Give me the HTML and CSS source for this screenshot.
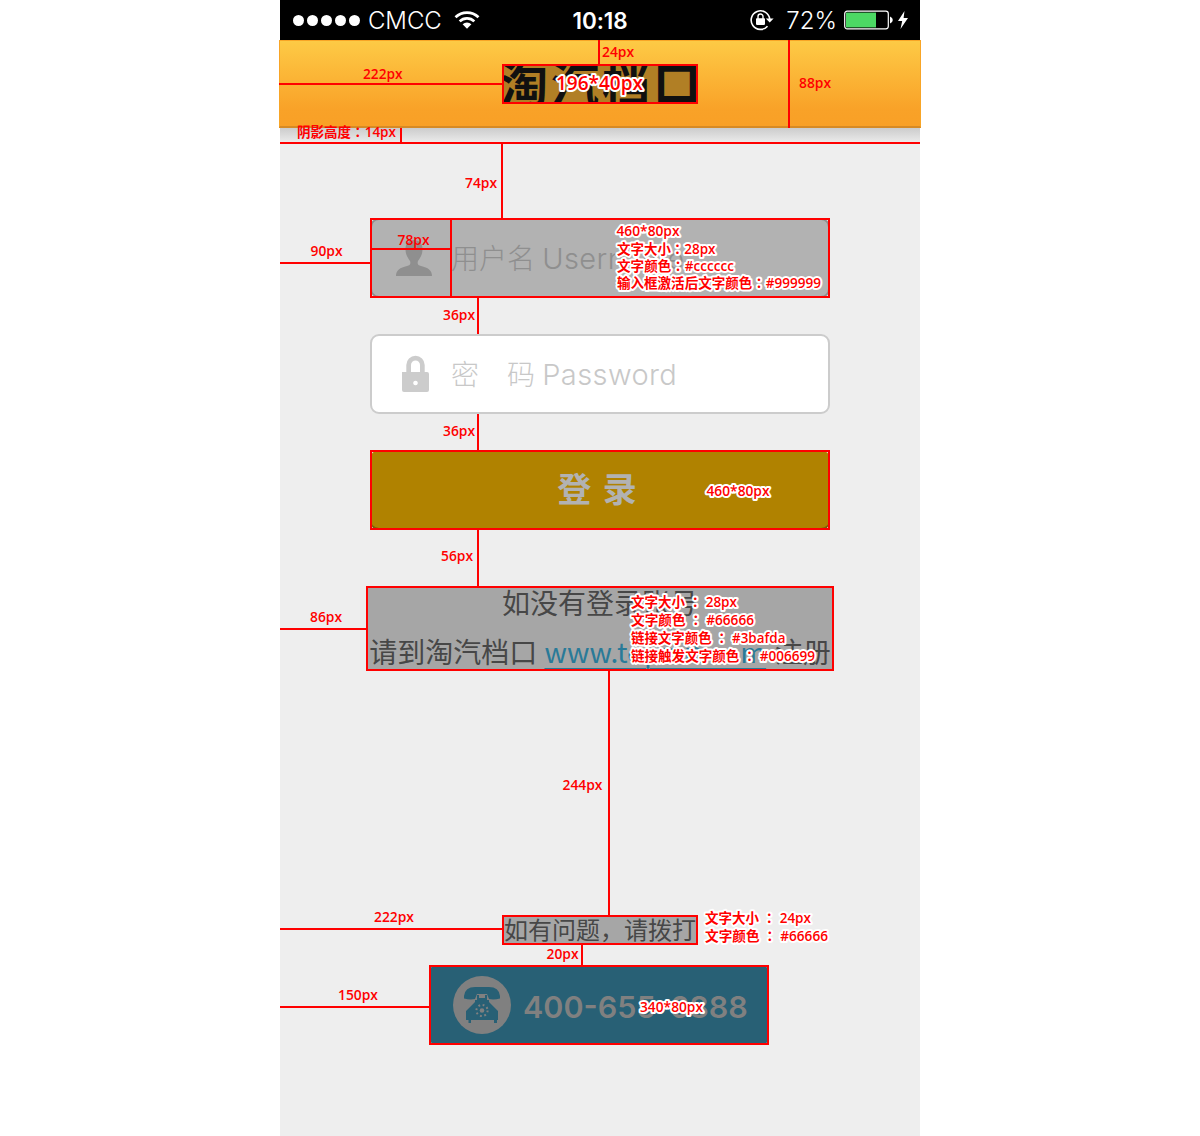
FILE: index.html
```html
<!DOCTYPE html>
<html lang="zh-CN">
<head>
<meta charset="utf-8">
<title>淘汽档口 登录</title>
<link rel="stylesheet" href="styles.css">
</head>
<body>
<div class="phone">
  <div class="status">
    <div class="status-left">
      <span class="signal"><i></i><i></i><i></i><i></i><i></i></span>
      <span class="carrier">CMCC</span>
      <svg class="wifi" width="26" height="20" viewBox="0 0 26 20"><g fill="none" stroke="#fff" stroke-width="2.7"><path d="M1.5 7.2a16.5 16.5 0 0 1 23 0"/><path d="M5.7 11.4a10.4 10.4 0 0 1 14.6 0"/></g><path d="M8.6 14.3a6.3 6.3 0 0 1 8.8 0L13 18.8z" fill="#fff"/></svg>
    </div>
    <span class="time">10:18</span>
    <div class="status-right">
      <svg class="rotate" width="24" height="22" viewBox="0 0 24 22"><path d="M17.500 17.200A9.300 9.300 0 1 1 19.700 10" fill="none" stroke="#fff" stroke-width="1.6"/><path d="M15.800 9.600h7.800l-3.900 4z" fill="#fff"/><rect x="6" y="9.300" width="9" height="6.600" rx=".8" fill="#fff"/><path d="M8 10V7.500a2.500 2.500 0 0 1 5 0V10" fill="none" stroke="#fff" stroke-width="1.4"/></svg>
      <span class="percent">72%</span>
      <svg class="battery" width="49" height="20" viewBox="0 0 49 20"><rect x=".7" y="1.200" width="43.600" height="17.600" rx="2.5" fill="none" stroke="#fff" stroke-width="1.2"/><rect x="2" y="2.600" width="30" height="14.800" fill="#4cd964"/><path d="M46 6.500q2.800 1 2.800 3.500t-2.800 3.500z" fill="#fff"/></svg>
      <svg class="bolt" width="12" height="20" viewBox="0 0 12 20"><path d="M7.500 1 1 11h4.200L3.500 19 11 8H6.600z" fill="#fff"/></svg>
    </div>
  </div>
  <header class="header"><h1 class="logo">淘汽档口</h1></header>
  <main class="main">
    <div class="field shaded">
      <svg class="field-icon" width="78" height="76" viewBox="0 0 78 76"><path d="M42 20c5.400 0 8.500 3.500 8.500 9 0 6-2.500 9-4.500 12-1 3 0 4.300 3 5 7 1.500 11 4.500 11 10H24c0-5.500 4-8.500 11-10 3-.7 4-2 3-5-2-3-4.500-6-4.500-12 0-5.500 3.100-9 8.500-9z"/></svg>
      <span class="placeholder">用户名 <b>Username</b></span>
    </div>
    <div class="field">
      <svg class="field-icon" width="78" height="76" viewBox="0 0 78 76"><path fill-rule="evenodd" d="M30 36h1.500h2.800V29a9.200 9.200 0 0 1 18.400 0v7h2.300a2 2 0 0 1 2 2v16a2 2 0 0 1-2 2H32a2 2 0 0 1-2-2zM39 36h9v-7a4.500 4.500 0 0 0-9 0zM43.500 44.700a2.300 2.300 0 1 0 .01 0z"/></svg>
      <span class="placeholder">密　码 <b>Password</b></span>
    </div>
    <button class="login" type="button">登 录</button>
    <p class="register"><span>如没有登录账号</span><span class="second">请到淘汽档口 <a class="link" href="#">www.topwit.com</a> 注册</span></p>
    <p class="question">如有问题，请拨打</p>
    <div class="call">
      <svg class="phone-icon" width="58" height="58" viewBox="0 0 58 58"><circle class="disc" cx="29" cy="29" r="29"/><path class="handset" d="M11 20q1-9 11-9h14q10 0 11 9v2.500q-6 1.500-11 .5l-2-5H24l-2 5q-5 1-11-.5z"/><path class="handset" d="M22 24h2v-5h2v3h6v-3h2v5h2v2l9 9v9h-1v3H41v-3H18v3h-2.500v-3H13v-9l9-9z"/><circle class="disc" cx="29" cy="34.500" r="2.300"/><circle class="dial" cx="29" cy="34.500" r="5.600"/></svg>
      <span class="number">400-655-6888</span>
    </div>
  </main>

  <svg class="notes" width="1200" height="1136" viewBox="0 0 1200 1136">
    <g class="lines">
      <path d="M599 40V64M279 84H502M789 40V128M280 143H920M401 128V142M502 144V218M280 263H370M372 249H451M451 218V298M478 298V334M478 414V450M478 530V586M280 629H366M609 671V915M280 929H502M582 945V965M280 1007H429"/>
      <rect x="503" y="65" width="194" height="38"/>
      <rect x="371" y="219" width="458" height="78"/>
      <rect x="371" y="451" width="458" height="78"/>
      <rect x="367" y="587" width="466" height="83"/>
      <rect x="503" y="916" width="194" height="28"/>
      <rect x="430" y="966" width="338" height="78"/>
    </g>
    <g class="labels">
      <text x="363" y="79" textLength="39.500" lengthAdjust="spacingAndGlyphs">222px</text>
      <text x="602" y="57" textLength="32" lengthAdjust="spacingAndGlyphs">24px</text>
      <text x="799" y="88" textLength="32" lengthAdjust="spacingAndGlyphs">88px</text>
      <text x="297" y="137" textLength="99" lengthAdjust="spacingAndGlyphs">阴影高度<tspan class="colon" lang="zh-TW">：</tspan>14px</text>
      <text x="465" y="188" textLength="32" lengthAdjust="spacingAndGlyphs">74px</text>
      <text x="310.500" y="256" textLength="32" lengthAdjust="spacingAndGlyphs">90px</text>
      <text x="397.500" y="245" textLength="32" lengthAdjust="spacingAndGlyphs">78px</text>
      <text x="443" y="320" textLength="32" lengthAdjust="spacingAndGlyphs">36px</text>
      <text x="443" y="436" textLength="32" lengthAdjust="spacingAndGlyphs">36px</text>
      <text x="441" y="561" textLength="32" lengthAdjust="spacingAndGlyphs">56px</text>
      <text x="310" y="622" textLength="32" lengthAdjust="spacingAndGlyphs">86px</text>
      <text x="562.500" y="790" textLength="40" lengthAdjust="spacingAndGlyphs">244px</text>
      <text x="374" y="922" textLength="40" lengthAdjust="spacingAndGlyphs">222px</text>
      <text x="546.500" y="959" textLength="32" lengthAdjust="spacingAndGlyphs">20px</text>
      <text x="338" y="1000" textLength="40" lengthAdjust="spacingAndGlyphs">150px</text>
    </g>
    <g class="labels outlined">
      <text class="large" x="556" y="90" textLength="87" lengthAdjust="spacingAndGlyphs">196*40px</text>
      <text x="616.500" y="236" textLength="63" lengthAdjust="spacingAndGlyphs">460*80px</text>
      <text x="617" y="254" textLength="98.500" lengthAdjust="spacingAndGlyphs">文字大小<tspan class="colon" lang="zh-TW">：</tspan>28px</text>
      <text x="617" y="271" textLength="117" lengthAdjust="spacingAndGlyphs">文字颜色<tspan class="colon" lang="zh-TW">：</tspan>#cccccc</text>
      <text x="617" y="288" textLength="204" lengthAdjust="spacingAndGlyphs">输入框激活后文字颜色<tspan class="colon" lang="zh-TW">：</tspan>#999999</text>
      <text x="706.500" y="496" textLength="63" lengthAdjust="spacingAndGlyphs">460*80px</text>
      <text x="631" y="607" textLength="106" lengthAdjust="spacingAndGlyphs">文字大小 <tspan class="colon" lang="zh-TW">：</tspan> 28px</text>
      <text x="631" y="625" textLength="123" lengthAdjust="spacingAndGlyphs">文字颜色 <tspan class="colon" lang="zh-TW">：</tspan> #66666</text>
      <text x="631" y="643" textLength="154.500" lengthAdjust="spacingAndGlyphs">链接文字颜色 <tspan class="colon" lang="zh-TW">：</tspan> #3bafda</text>
      <text x="631" y="661" textLength="184" lengthAdjust="spacingAndGlyphs">链接触发文字颜色 <tspan class="colon" lang="zh-TW">：</tspan> #006699</text>
      <text x="705" y="923" textLength="106" lengthAdjust="spacingAndGlyphs">文字大小 <tspan class="colon" lang="zh-TW">：</tspan> 24px</text>
      <text x="705" y="941" textLength="123" lengthAdjust="spacingAndGlyphs">文字颜色 <tspan class="colon" lang="zh-TW">：</tspan> #66666</text>
      <text x="640" y="1012" textLength="63" lengthAdjust="spacingAndGlyphs">340*80px</text>
    </g>
  </svg>
</div>
</body>
</html>
```
FILE: styles.css
```css
* { box-sizing: border-box; }
body { margin: 0; background: #fff; font-family: "Noto Sans CJK SC", sans-serif; }
.phone { width: 640px; height: 1136px; margin: 0 auto; background: #eee; position: relative; }
.status { height: 40px; background: #000; color: #fff; display: grid; grid-template-columns: 1fr auto 1fr; align-items: center; padding: 0 11px 0 13px; font-family: Inter, sans-serif; font-size: 24px; line-height: 38px; }
.status-left, .status-right { display: flex; align-items: center; }
.status-right { justify-content: flex-end; }
.signal { display: flex; gap: 3px; }
.signal i { width: 11px; height: 11px; border-radius: 50%; background: #fff; }
.carrier { margin-left: 8px; font-weight: 300; letter-spacing: -.1px; padding-top: 2px; }
.wifi { margin-left: 12px; }
.time { font-size: 22.5px; font-weight: 600; letter-spacing: -.1px; padding-top: 2px; margin-left: -2px; }
.percent { margin: 0 7px 0 12px; font-weight: 300; padding-top: 2px; }
.bolt { margin-left: 4px; }
.header { height: 88px; margin: 0 -1px; display: flex; justify-content: center; padding-top: 23px; background: linear-gradient(#fdca45, #fdc542 10%, #f9a228 80%, #f9a026); border: 1px solid #f8a526; border-bottom: 2px solid #d78a24; position: relative; }
.logo { margin: 0; width: 196px; height: 40px; display: flex; justify-content: center; background: #b17f25; color: #101010; font-size: 48px; font-weight: 700; line-height: 35px; letter-spacing: 3px; padding-left: 4px; white-space: nowrap; overflow: hidden; }
.main { height: 1008px; padding-top: 90px; display: flex; flex-direction: column; align-items: center; background: linear-gradient(#ccc, #eee 16px); }
.field { width: 460px; height: 80px; margin-bottom: 36px; border: 2px solid #ccc; border-radius: 9px; background: #fff; display: flex; align-items: center; color: #c8c8c8; }
.field-icon { fill: #ccc; }
.placeholder { font-size: 28px; font-weight: 300; white-space: pre; line-height: 76px; padding-left: 1px; }
.placeholder b { font-family: Inter, sans-serif; font-weight: 300; font-size: 29px; letter-spacing: .4px; margin-left: 1px; }
.shaded { background: #b2b2b2; color: #8f8f8f; border-color: #8f8f8f; }
.shaded .field-icon { fill: #8f8f8f; }
.login { width: 460px; height: 80px; border: 0; border-radius: 9px; background: #b08200; box-shadow: inset 0 -2px #7b5d0b; color: #b2b2b2; font: 700 34px/76px "Noto Sans CJK SC", sans-serif; padding: 0 6px 4px 0; word-spacing: 4px; }
.register { width: 468px; height: 85px; margin: 56px 0 0; background: #a6a6a6; color: #474747; font-size: 28px; line-height: 49px; display: flex; flex-direction: column; align-items: center; white-space: nowrap; }
.register span { height: 49px; margin-top: -8px; }
.register .second { margin-top: 0; }
.link { display: inline-block; width: 222px; margin: 0 2px 0 1px; color: #297a98; font-size: 28px; letter-spacing: 0; text-decoration: underline; text-decoration-thickness: 1px; text-underline-offset: 5px; }
.question { width: 196px; height: 30px; margin: 244px 0 20px; background: #a6a6a6; color: #474747; font-size: 24px; line-height: 28px; text-align: center; white-space: nowrap; }
.call { width: 340px; height: 80px; background: #286075; border-radius: 8px; display: flex; align-items: center; padding: 0 0 0 24px; gap: 12px; margin-right: 2px; }
.disc { fill: #808080; }
.handset { fill: #286075; }
.dial { fill: none; stroke: #808080; stroke-width: 2; stroke-dasharray: 1.8 2.6; }
.number { color: #808080; font: 600 30.5px Inter, sans-serif; letter-spacing: 0; padding-top: 3px; white-space: nowrap; }
.notes { position: absolute; left: -280px; top: 0; pointer-events: none; }
.lines { fill: none; stroke: #f00; stroke-width: 2; }
.labels { fill: #f00; font: 600 14px "Open Sans", "Noto Sans CJK SC", sans-serif; }
.outlined { stroke: #fff; stroke-width: 4px; stroke-linejoin: round; paint-order: stroke; }
.labels .large { font-size: 20px; }
.colon { font-family: "Noto Sans CJK TC", sans-serif; }
```
